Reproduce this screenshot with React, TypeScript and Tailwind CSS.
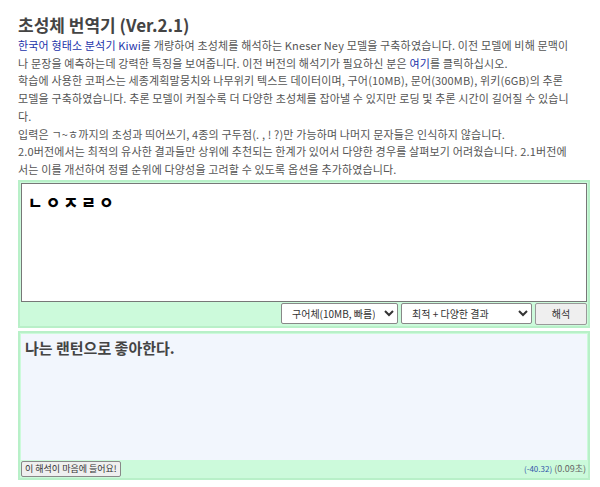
import { useState } from "react";

const font = { fontFamily: '"Noto Sans CJK KR", "Noto Sans", sans-serif' };

const lines = [
  ["한국어 형태소 분석기 Kiwi", "를 개량하여 초성체를 해석하는 Kneser Ney 모델을 구축하였습니다. 이전 모델에 비해 문맥이"],
  ["", "나 문장을 예측하는데 강력한 특징을 보여줍니다. 이전 버전의 해석기가 필요하신 분은 ", "여기", "를 클릭하십시오."],
  ["", "학습에 사용한 코퍼스는 세종계획말뭉치와 나무위키 텍스트 데이터이며, 구어(10MB), 문어(300MB), 위키(6GB)의 추론"],
  ["", "모델을 구축하였습니다. 추론 모델이 커질수록 더 다양한 초성체를 잡아낼 수 있지만 로딩 및 추론 시간이 길어질 수 있습니"],
  ["", "다."],
  ["", "입력은 ㄱ~ㅎ까지의 초성과 띄어쓰기, 4종의 구두점(. , ! ?)만 가능하며 나머지 문자들은 인식하지 않습니다."],
  ["", "2.0버전에서는 최적의 유사한 결과들만 상위에 추천되는 한계가 있어서 다양한 경우를 살펴보기 어려웠습니다. 2.1버전에"],
  ["", "서는 이를 개선하여 정렬 순위에 다양성을 고려할 수 있도록 옵션을 추가하였습니다."],
];

export default function App() {
  const [text, setText] = useState("ㄴㅇㅈㄹㅇ");

  return (
    <div className="bg-white min-h-[487px] px-[18px] pt-[13px] text-[#555]" style={font}>
      <h1 className="text-[17px] font-bold leading-[24px] text-[#444]">초성체 번역기 (Ver.2.1)</h1>
      <div className="text-[11px] leading-[17.7px] tracking-[0.15px] whitespace-nowrap">
        {lines.map((l, i) => (
          <div key={i}>
            {l[0] && <a className="text-[#2233aa]">{l[0]}</a>}
            {l[1]}
            {l[2] && <a className="text-[#2233aa]">{l[2]}</a>}
            {l[3]}
          </div>
        ))}
      </div>

      <div className="mt-[1px] w-[572px] bg-[#ccfadb] border-2 border-[#b8f0c8] p-[1px]">
        <textarea
          value={text}
          onChange={(e) => setText(e.target.value)}
          className="block w-full h-[119px] bg-white border border-[#777] px-[6px] py-[6px] text-[16px] font-black tracking-[3px] text-black resize-none outline-none"
          style={font}
        />
        <div className="flex justify-end items-center gap-[3px] mt-[1px]">
          <select className="w-[117px] h-[21px] bg-white border border-[#888] rounded-[2px] text-[10px] text-[#333] px-[6px]" style={font}>
            <option>구어체(10MB, 빠름)</option>
          </select>
          <select className="w-[131px] h-[21px] bg-white border border-[#888] rounded-[2px] text-[10px] text-[#333] px-[6px]" style={font}>
            <option>최적 + 다양한 결과</option>
          </select>
          <button className="w-[52px] h-[22px] bg-[#efefef] border border-[#999] rounded-[2px] text-[10px] text-[#333]">해석</button>
        </div>
      </div>

      <div className="mt-[3px] w-[572px] bg-[#ccfadb] border-2 border-[#b8f0c8] p-[1px]">
        <div className="h-[126px] bg-[#f2f6fd] px-[4px] py-[4px] text-[15px] font-bold text-[#444] leading-[20px]">
          나는 랜턴으로 좋아한다.
        </div>
        <div className="flex items-center justify-between mt-[1px]">
          <button className="h-[16px] px-[3px] bg-[#efefef] border border-[#888] rounded-[2px] text-[9px] text-[#333] leading-none">
            이 해석이 마음에 들어요!
          </button>
          <div className="text-[9px] pr-[1px]">
            <span className="text-[#3355aa] text-[8px]">(-40.32)</span> <span className="text-[#666]">(0.09초)</span>
          </div>
        </div>
      </div>
    </div>
  );
}
